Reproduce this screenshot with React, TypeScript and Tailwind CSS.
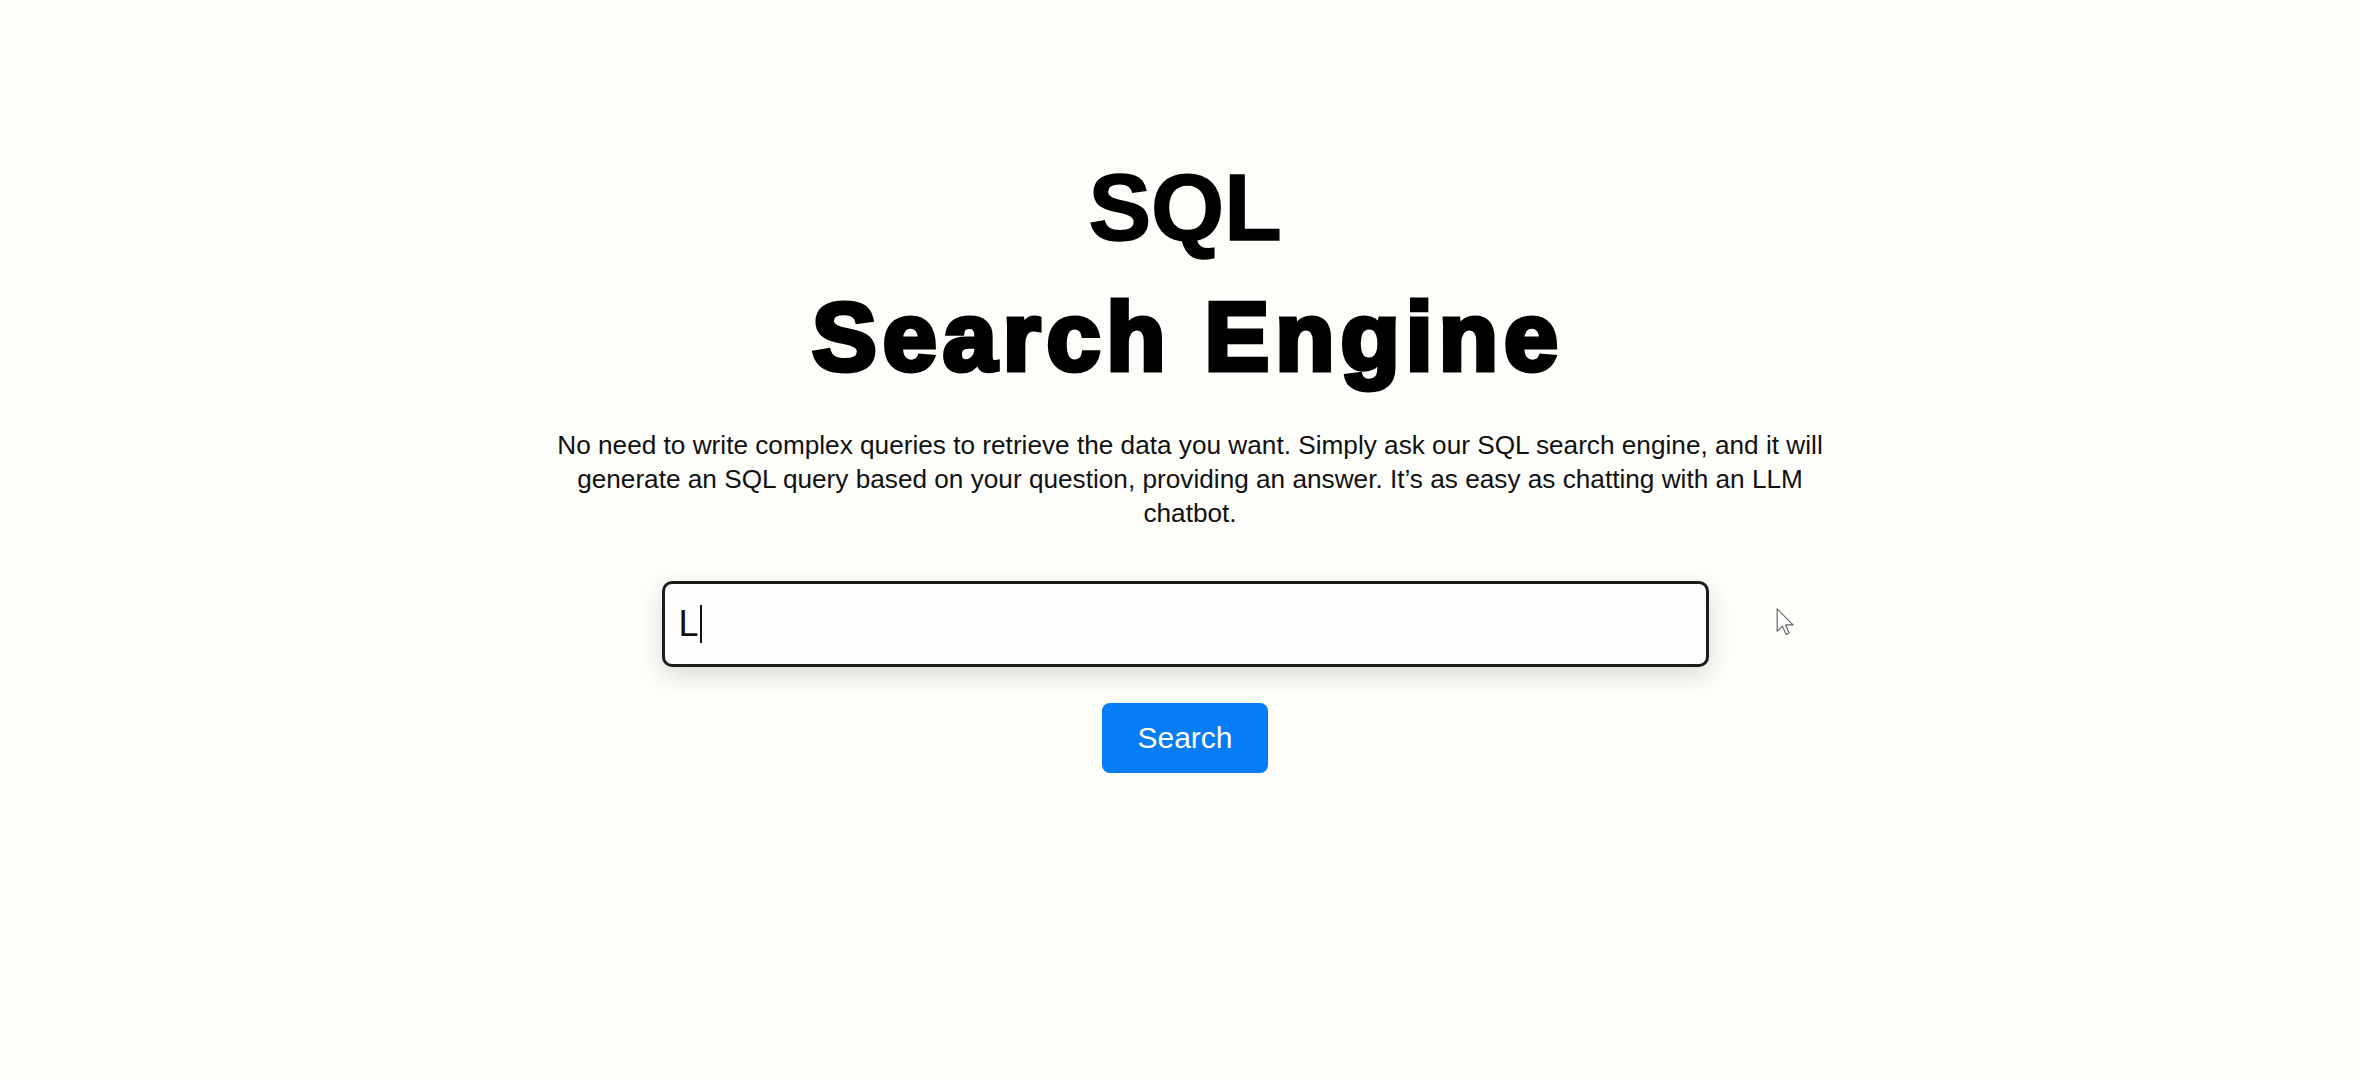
import React from 'react';

export default function App() {
  return (
    <div className="min-h-screen w-full bg-[#fdfdfa] font-['Liberation_Sans',Arial,sans-serif] text-black">
      <main className="flex flex-col items-center pt-[143px] pl-[10px]">
        {/* Heading */}
        <h1 className="text-center">
          <span className="block text-[94px] font-bold leading-[129px] [-webkit-text-stroke:1.5px_black]">SQL</span>
          <span className="block pl-[6px] text-[97px] font-bold leading-[129px] tracking-[6px] [-webkit-text-stroke:5px_black]">
            Search Engine
          </span>
        </h1>

        <p className="mt-[27px] w-[1300px] pl-[10px] text-center text-[26.2px] leading-[34px] text-[#111]">
          No need to write complex queries to retrieve the data you want. Simply ask our SQL search engine, and it will
          generate an SQL query based on your question, providing an answer. It’s as easy as chatting with an LLM
          chatbot.
        </p>

        {/* Query box */}
        <div className="relative mt-[51px] w-[1047px]">
          <div className="flex h-[86px] items-center rounded-[10px] border-[3px] border-[#1c1c1c] bg-[#fefefe] pl-[14px] shadow-[0_8px_24px_rgba(0,0,0,0.14)]">
            <span className="text-[36px] leading-none text-[#111]">L</span>
            <span className="ml-[1px] h-[38px] w-[2px] bg-[#111]" />
          </div>
          <MouseCursor className="absolute left-[calc(100%+67px)] top-[27px]" />
        </div>

        <button className="mt-[36px] h-[70px] w-[166px] rounded-[8px] bg-[#067cf5] text-[30px] leading-none text-white">
          Search
        </button>
      </main>
    </div>
  );
}

// arrow pointer sitting right of the input
function MouseCursor({ className }: { className?: string }) {
  return (
    <svg width="19" height="28" viewBox="0 0 12.5 19" className={className}>
      <path
        d="M0.6 0.6 L0.6 15.8 L4.2 12.3 L6.6 17.9 L8.7 17 L6.4 11.5 L11.4 11.5 Z"
        fill="#fff"
        stroke="#666"
        strokeWidth="0.8"
        strokeLinejoin="round"
      />
    </svg>
  );
}
